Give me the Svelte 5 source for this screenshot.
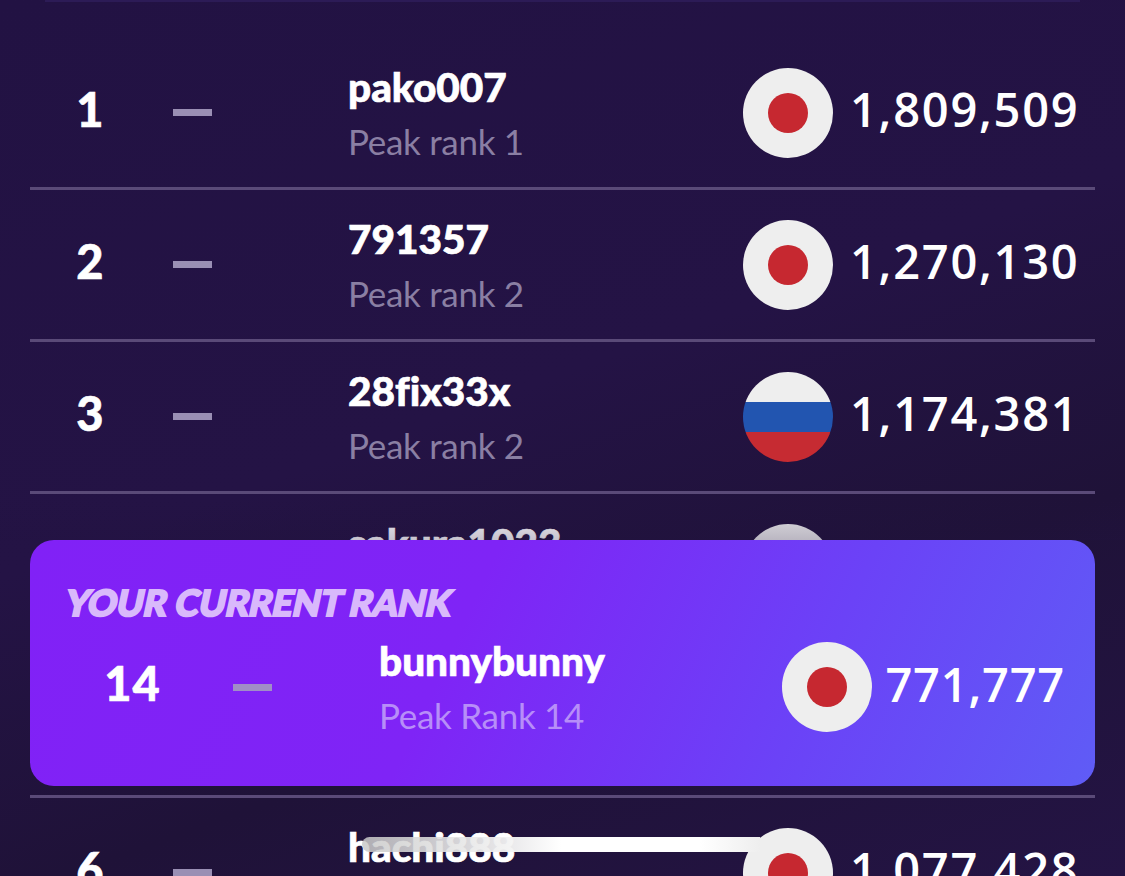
<script>
  const rows = [
    { rank: 1, name: "pako007", peak: 1, flag: "jp", score: "1,809,509" },
    { rank: 2, name: "791357", peak: 2, flag: "jp", score: "1,270,130" },
    { rank: 3, name: "28fix33x", peak: 2, flag: "ru", score: "1,174,381" },
    { rank: 4, name: "sakura1023", peak: 4, flag: "jp", score: "1,098,220" },
    { rank: 5, name: "", peak: 5, flag: "jp", score: "" },
    { rank: 6, name: "hachi888", peak: 6, flag: "jp", score: "1,077,428" },
  ];
</script>

{#snippet flag(kind)}
  {#if kind === "ru"}
    <svg class="flag" viewBox="0 0 90 90" aria-hidden="true">
      <clipPath id="ru-clip"><circle cx="45" cy="45" r="45" /></clipPath>
      <g clip-path="url(#ru-clip)">
        <rect width="90" height="30" fill="#eeeeee" />
        <rect y="30" width="90" height="30" fill="#2255b0" />
        <rect y="60" width="90" height="30" fill="#c62b32" />
      </g>
    </svg>
  {:else}
    <svg class="flag" viewBox="0 0 90 90" aria-hidden="true">
      <circle cx="45" cy="45" r="45" fill="#eeeeee" />
      <circle cx="45" cy="45" r="20" fill="#c62830" />
    </svg>
  {/if}
{/snippet}

<div class="screen">
  <div class="top-edge"></div>
  <div class="list">
    {#each rows as row}
      <div class="row">
        <div class="rank">{row.rank}</div>
        <div class="move"><span class="dash"></span></div>
        <div class="player">
          <div class="name">{row.name}</div>
          <div class="peak">Peak rank {row.peak}</div>
        </div>
        {@render flag(row.flag)}
        <div class="score">{row.score}</div>
      </div>
    {/each}
  </div>

  <div class="fade"></div>

  <div class="card">
    <div class="card-title">YOUR CURRENT RANK</div>
    <div class="card-row">
      <div class="rank">14</div>
      <div class="move"><span class="dash"></span></div>
      <div class="player">
        <div class="name">bunnybunny</div>
        <div class="peak">Peak Rank 14</div>
      </div>
      {@render flag("jp")}
      <div class="score">771,777</div>
    </div>
  </div>

  <div class="home-bar"></div>
</div>

<style>
  :global(body) {
    background: #21123f;
    overflow: hidden;
  }
  .screen {
    position: relative;
    height: 876px;
    overflow: hidden;
    background: linear-gradient(160deg, #221243 0%, #241345 45%, #1f1238 70%, #241444 100%);
    font-family: Lato, "Liberation Sans", sans-serif;
    color: #fff;
  }
  .top-edge {
    position: absolute;
    top: 0;
    left: 45px;
    right: 45px;
    height: 2px;
    background: #2c1b56;
  }
  .list {
    padding: 38px 30px 0;
  }
  .row {
    display: grid;
    grid-template-columns: 120px 198px 1fr 90px auto;
    align-items: center;
    height: 149px;
    border-bottom: 3px solid #5a4a78;
  }
  .rank {
    text-align: center;
    font-size: 47px;
    font-weight: 900;
    padding-bottom: 8px;
    -webkit-text-stroke: 0.6px #fff;
  }
  .move {
    padding-left: 23px;
  }
  .dash {
    display: block;
    width: 39px;
    height: 7px;
    background: #9a8fb4;
  }
  .name {
    font-size: 40.5px;
    font-weight: 900;
    line-height: 46px;
    height: 46px;
    margin-top: 1px;
    font-variant-ligatures: none;
    -webkit-text-stroke: 0.7px #fff;
  }
  .peak {
    font-size: 35px;
    line-height: 44px;
    margin-top: 9px;
    color: #8a7fa3;
    letter-spacing: -0.3px;
  }
  .flag {
    display: block;
    width: 90px;
    height: 90px;
  }
  .score {
    width: 245px;
    margin-left: 17px;
    padding-bottom: 7px;
    box-sizing: border-box;
    font-family: "Open Sans", sans-serif;
    font-size: 47px;
    font-weight: 600;
    letter-spacing: 1.75px;
    white-space: nowrap;
  }
  .fade {
    position: absolute;
    left: 0;
    right: 0;
    top: 500px;
    height: 40px;
    background: linear-gradient(rgba(33, 18, 63, 0), rgba(33, 18, 63, 0.25));
  }
  .card {
    position: absolute;
    top: 540px;
    left: 30px;
    width: 1065px;
    height: 246px;
    box-sizing: border-box;
    padding: 40px 30px 0 36px;
    border-radius: 24px;
    background: linear-gradient(115deg, #8121f6 0%, #7f24f6 40%, #6b42f7 72%, #5f5cf6 100%);
  }
  .card-title {
    margin-left: -4px;
    font-size: 36px;
    font-weight: 900;
    line-height: 44px;
    letter-spacing: -0.1px;
    color: #d9b9fb;
    -webkit-text-stroke: 2px #d9b9fb;
    transform: skewX(-12deg);
    transform-origin: left bottom;
    white-space: nowrap;
  }
  .card-row {
    display: grid;
    grid-template-columns: 133px 180px 1fr 90px auto;
    align-items: center;
    margin-top: 13px;
  }
  .card-row .rank {
    letter-spacing: 1px;
  }
  .card-row .move {
    padding-left: 34px;
  }
  .card-row .dash {
    background: #a08ec6;
  }
  .card-row .peak {
    color: #b78ef8;
  }
  .card-row .score {
    width: auto;
    margin-left: 13px;
    letter-spacing: 0.8px;
  }
  .home-bar {
    position: absolute;
    left: 362px;
    top: 837px;
    width: 398px;
    height: 15px;
    border-radius: 8px 0 0 8px;
    background: linear-gradient(90deg, rgba(200, 200, 200, 0.85) 0%, rgba(225, 225, 225, 0.9) 20%, #ffffff 50%, #ffffff 85%, #eeeeee 100%);
  }
</style>
